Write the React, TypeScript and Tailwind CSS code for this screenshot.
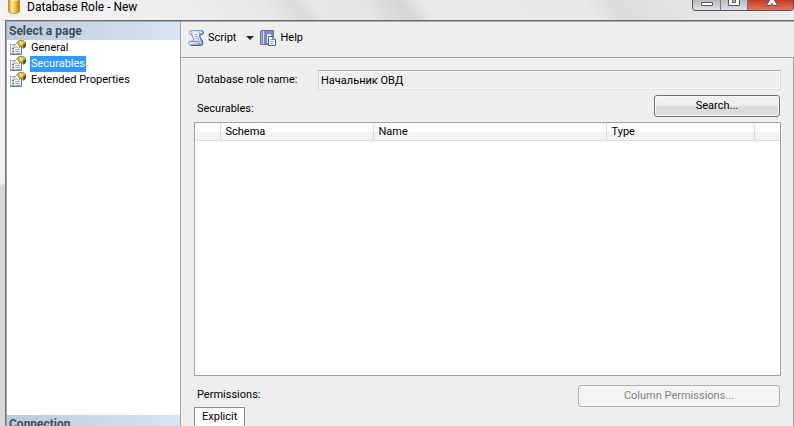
import React, { useState } from "react";

const pages = ["General", "Securables", "Extended Properties"];

const columns = [
  { name: "", width: "w-[25px]" },
  { name: "Schema", width: "w-[153px]" },
  { name: "Name", width: "w-[233px]" },
  { name: "Type", width: "w-[148px]" },
  { name: "", width: "w-auto" },
];

const DatabaseIcon = () => (
  <svg width="12" height="14" viewBox="0 0 12 14" className="block shrink-0">
    <defs>
      <linearGradient id="gold">
        <stop offset="0" stopColor="#c8880c" />
        <stop offset="0.3" stopColor="#fff0a8" />
        <stop offset="0.6" stopColor="#f5c542" />
        <stop offset="1" stopColor="#b8780a" />
      </linearGradient>
    </defs>
    <path d="M0.5 0V11C0.5 14.3 11.5 14.3 11.5 11V0Z" fill="url(#gold)" stroke="#b07a10" strokeWidth="0.7" />
    <path d="M1 0C2 1.2 10 1.2 11 0Z" fill="#fdeeb0" />
  </svg>
);

const PageIcon = () => (
  <svg width="16" height="16" viewBox="0 0 16 16" className="block shrink-0">
    <rect x="0.5" y="4.5" width="11" height="9" fill="#f7f9ff" stroke="#a3aecb" />
    <path d="M11.5 7V14.5H0" fill="none" stroke="#6c7aa6" />
    <path d="M2 8.5H4M2 11.5H4" stroke="#3d63bd" strokeWidth="1.4" />
    <path d="M5 9.5H10M5 11.5H10" stroke="#a3afd0" />
    <path d="M3.5 6.5L8 2L11.5 5.5L9 8H7.5L6.5 6.5L5 7.5Z" fill="#fffdf2" stroke="#8c8676" strokeWidth="0.8" />
    <path d="M7 2.5L9 0.7H13.5L15.6 2.5V6.5L13.5 8.5L11.5 6L9.5 6.5L8.5 4.5Z" fill="#e0bb45" stroke="#7a6426" strokeWidth="0.8" />
    <path d="M9 2.2H13M10 3.8H12" stroke="#fff1a1" />
    <path d="M13 5L15.6 3V6.5L13.5 8.5Z" fill="#4f4426" />
  </svg>
);

const ScriptIcon = () => (
  <svg width="16" height="16" viewBox="0 0 16 16" className="block shrink-0">
    <defs>
      <linearGradient id="paper" x2="1" y2="1">
        <stop offset="0" stopColor="#ffffff" />
        <stop offset="0.5" stopColor="#dfe8fa" />
        <stop offset="1" stopColor="#8fa7da" />
      </linearGradient>
    </defs>
    <path
      d="M3 0.7H13.5C15.8 0.7 15.8 4.3 13.8 4.3H12.2C11.4 5.5 11.8 7 13 9C15.3 12 15.3 15.2 13 15.3H3C0.2 15.3 0 11.5 1.5 11.2H5.2C6 10 5.2 8 4.5 7L4 4.5H2C0.5 4 1 0.7 3 0.7Z"
      fill="url(#paper)"
      stroke="#7d92c0"
    />
    <path d="M13.5 0.7C15.8 0.7 15.8 4.3 13.8 4.3H12.2C11.4 5.5 11.8 7 13 9C15.3 12 15.3 15.2 13 15.3H3" fill="none" stroke="#41557f" />
    <path d="M3.2 1.2C4.7 2 4 4 2.5 4.5M11.8 1.5C10.8 2.5 11.2 4 12.5 4M1.5 11.5H9.5C11 12 10.8 14 12.2 15" fill="none" stroke="#7085b0" strokeWidth="0.8" />
    <path d="M6 4.5H9.5M6.5 6.5H10M7.2 8.5H11" stroke="#a9bce4" />
  </svg>
);

const HelpIcon = () => (
  <svg width="16" height="16" viewBox="0 0 16 16" className="block shrink-0">
    <path d="M0.5 1.2L2 0.5H13.5V14.5H0.5Z" fill="#8586c8" stroke="#6a69ac" />
    <path d="M3.5 1V14" stroke="#d4d5f4" />
    <path d="M1.5 2V14" stroke="#a7a8df" />
    <path d="M6.5 3.5H10L12.5 6V13.5H6.5Z" fill="#f4f7ff" stroke="#60749f" strokeWidth="0.8" />
    <path d="M8.5 6.5H12.5L15.5 9.5V15.5H8.5Z" fill="#fff" stroke="#435c86" />
    <path d="M12.5 6.5V9.5H15.5" fill="#cdd9f0" stroke="#435c86" strokeWidth="0.8" />
    <path d="M10 9.5H12M10 11.5H14M10 13.5H14" stroke="#9fb3da" />
  </svg>
);

const TitleBar = () => (
  <header className="flex h-5 shrink-0 items-start justify-between bg-[linear-gradient(55deg,#f4f4f4_0%,#ededed_25%,#e7e7e7_34%,#dadada_38%,#e7e7e7_40%,#e4e4e4_46%,#d6d6d6_51%,#e9e9e9_54%,#e8e8e8_74%,#dcdcdc_77%,#e5e5e5_88%,#efefef_100%)]">
    <div className="flex items-start gap-[7px] pl-2">
      <DatabaseIcon />
      <h1 className="font-['Roboto','Open_Sans',sans-serif] text-[12px] leading-[14px] whitespace-nowrap">
        Database Role - New
      </h1>
    </div>
    <div className="flex h-[11px] w-[102px] shrink-0 overflow-hidden rounded-b-[4px] border border-t-0 border-[#55565d] bg-[#c9cacf]">
      <button aria-label="Minimize" className="h-full w-7 border-r border-[#77787f] bg-linear-to-b from-[#b9bac0] to-[#dedfe4]">
        <svg width="27" height="10" viewBox="0 0 27 10" className="block">
          <rect x="8.5" y="2.5" width="11" height="3" rx="0.5" fill="#fff" stroke="#55565f" />
        </svg>
      </button>
      <button aria-label="Maximize" className="h-full w-[27px] border-r border-[#77787f] bg-linear-to-b from-[#b9bac0] to-[#dedfe4]">
        <svg width="26" height="10" viewBox="0 0 26 10" className="block">
          <path d="M7.5 -4H18.5V5.5H7.5Z" fill="#fff" stroke="#55565f" />
          <path d="M11.5 -1H14.5V2.5H11.5Z" fill="#b9bac0" stroke="#55565f" />
        </svg>
      </button>
      <button aria-label="Close" className="h-full flex-1 bg-linear-to-b from-[#c23a22] to-[#df765c]">
        <svg width="46" height="10" viewBox="0 0 46 10" className="block">
          <path d="M18 -5H22L24 -2L26 -5H30L26.5 0.5L30 5.5H25.5L24 3.5L22.5 5.5H18L21.5 0.5Z" fill="#f7f7f7" stroke="#554b55" />
        </svg>
      </button>
    </div>
  </header>
);

const App = () => {
  const [selectedPage, setSelectedPage] = useState("Securables");

  return (
    <div className="flex h-screen flex-col overflow-hidden bg-[#efefef] font-['Roboto','Liberation_Sans',sans-serif] text-[11px] leading-4 text-black">
      <TitleBar />

      <div className="flex min-h-0 flex-1">
        {/* Window frame */}
        <div className="w-[5px] shrink-0 bg-linear-to-b from-[#f1f1f1] from-40% to-[#d8d8d8] to-41%" />

        <div className="flex min-w-0 flex-1 border-t border-l border-[#6f7075]">
          <div className="flex min-w-0 flex-1 border-t border-l border-[#a5a6aa]">
            {/* Page list */}
            <aside className="flex w-[174px] shrink-0 flex-col border-r border-[#a0a0a5] bg-white">
              <h2 className="h-[18px] shrink-0 bg-linear-to-r from-[#bccbdc] to-[#d7e4f2] pl-0.5 text-[12px] leading-[18px] font-bold text-[#3f4f5c]">
                Select a page
              </h2>
              <nav className="flex flex-1 flex-col items-start pl-[3px]">
                {pages.map((page) => (
                  <button key={page} onClick={() => setSelectedPage(page)} className="flex h-4 items-center gap-1 text-left">
                    <PageIcon />
                    <span className={`h-4 px-px whitespace-nowrap ${selectedPage === page ? "bg-[#3399ff] text-white" : ""}`}>
                      {page}
                    </span>
                  </button>
                ))}
              </nav>
              <h2 className="h-[11px] shrink-0 overflow-hidden bg-linear-to-r from-[#bccbdc] to-[#d7e4f2] pl-0.5 text-[12px] leading-[18px] font-bold text-[#3f4f5c]">
                Connection
              </h2>
            </aside>

            <main className="flex min-w-0 flex-1 flex-col">
              <div className="flex h-9 shrink-0 items-center border-b border-[#a0a0a5] pb-1 pl-[7px]">
                <button className="flex items-center gap-1">
                  <ScriptIcon />
                  Script
                </button>
                <button aria-label="Script options" className="pr-1.5 pl-2.5">
                  <svg width="8" height="4" viewBox="0 0 8 4" className="block">
                    <path d="M0 0H8L4 4Z" fill="#222" />
                  </svg>
                </button>
                <button className="flex items-center gap-1">
                  <HelpIcon />
                  Help
                </button>
              </div>

              <section className="flex min-h-0 flex-1 flex-col border-r border-[#a0a0a5] pt-3 pr-3 pl-[13px]">
                <div className="flex h-5 shrink-0 items-center">
                  <label htmlFor="role" className="w-[124px] shrink-0 pl-[3px]">
                    Database role name:
                  </label>
                  <input
                    id="role"
                    readOnly
                    defaultValue="Начальник ОВД"
                    className="h-5 min-w-0 flex-1 border border-t-[#abadb3] border-r-[#dbdde6] border-b-[#e3e4ea] border-l-[#cfd0d9] bg-[#efefef] px-0.5 shadow-[inset_0_0_0_1px_#f8f8f8] outline-none"
                  />
                </div>

                <div className="mt-[5px] flex h-[22px] shrink-0 items-center justify-between">
                  <h3 className="pt-1.5 pl-[3px]">Securables:</h3>
                  <button className="mr-px h-[22px] w-[126px] rounded-[3px] border border-[#707070] bg-linear-to-b from-[#efefef] from-45% to-[#dcdcdc] to-55% shadow-[inset_0_0_0_1px_#f7f7f7]">
                    Search...
                  </button>
                </div>

                <div className="mt-[5px] min-h-0 flex-1 border border-[#a0a0a5] bg-white">
                  <table className="w-full table-fixed border-collapse">
                    <thead>
                      <tr className="h-[17px] bg-linear-to-b from-white from-45% to-[#f2f3f5] to-50%">
                        {columns.map((column, i) => (
                          <th
                            key={i}
                            className={`h-[17px] border-r border-b border-[#dcdce0] p-0 pt-px pl-[5px] text-left leading-4 font-normal last:border-r-0 ${column.width}`}
                          >
                            {column.name}
                          </th>
                        ))}
                      </tr>
                    </thead>
                    <tbody />
                  </table>
                </div>

                <div className="mt-2 flex h-[23px] shrink-0 items-start justify-between pt-px">
                  <h3 className="pt-0.5 pl-[3px]">Permissions:</h3>
                  <button disabled className="mr-px h-[22px] w-[202px] rounded-[3px] border border-[#adb2b5] bg-[#f4f4f4] text-[#838383]">
                    Column Permissions...
                  </button>
                </div>

                <div role="tablist" className="flex shrink-0">
                  <button role="tab" aria-selected="true" className="h-[19px] border border-b-0 border-[#898c95] bg-white px-[7px] leading-[18px]">
                    Explicit
                  </button>
                </div>
              </section>
            </main>
          </div>
        </div>
      </div>
    </div>
  );
};

export default App;
